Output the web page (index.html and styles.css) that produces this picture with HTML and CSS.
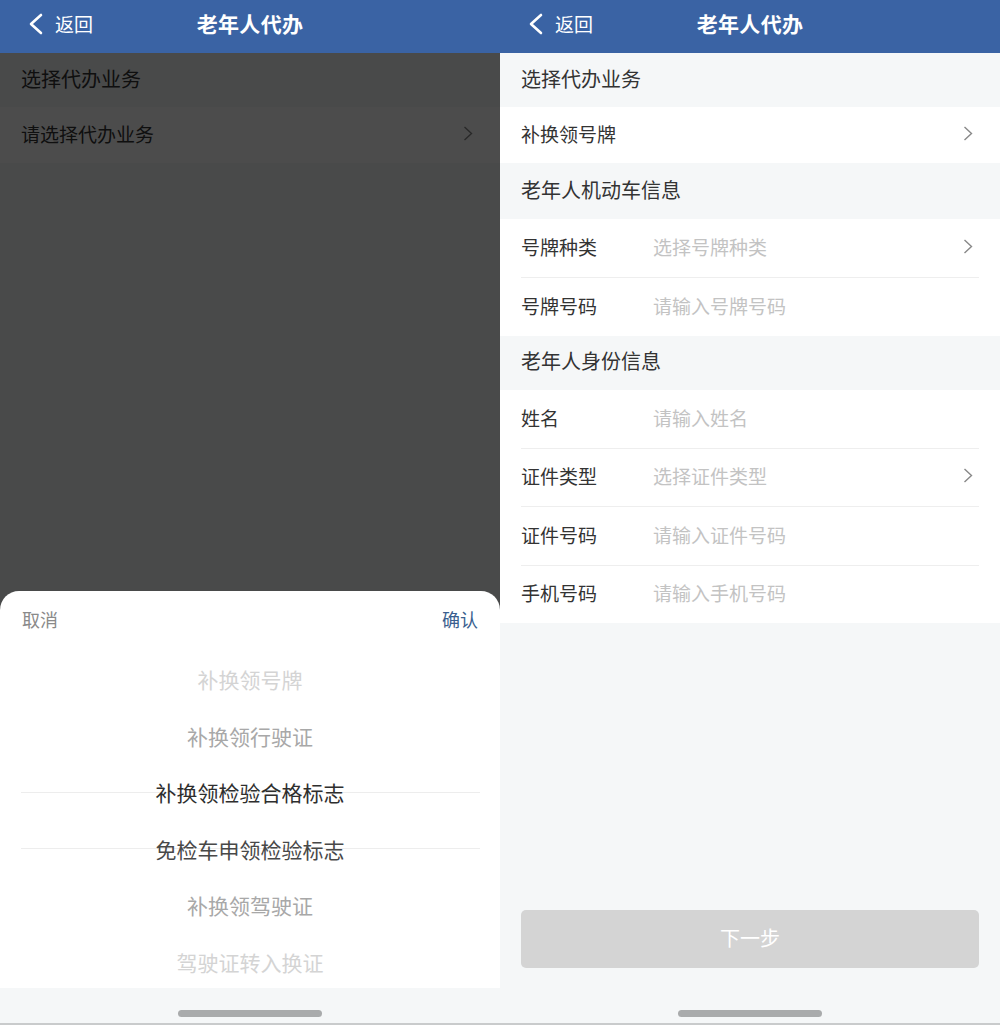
FILE: index.html
```html
<!DOCTYPE html>
<html lang="zh-CN">
<head>
<meta charset="utf-8">
<title>老年人代办</title>
<link rel="stylesheet" href="styles.css">
</head>
<body>
<div class="screens">
  <!-- Left screen: picker open -->
  <div class="screen screen-left">
    <div class="header">
      <div class="back">
        <svg class="back-icon" width="16" height="22" viewBox="0 0 16 22"><polyline points="13,2 3,11 13,20" fill="none" stroke="#fff" stroke-width="2.6" stroke-linecap="round" stroke-linejoin="round"/></svg>
        <span class="back-text">返回</span>
      </div>
      <div class="title">老年人代办</div>
    </div>
    <div class="content">
      <div class="sec sec-top">选择代办业务</div>
      <div class="row row-select">
        <span class="row-label grow">请选择代办业务</span>
        <svg class="chev" width="10" height="15" viewBox="0 0 10 15"><polyline points="1.5,1 8.5,7.5 1.5,14" fill="none" stroke="#888" stroke-width="1.4"/></svg>
      </div>
    </div>
    <div class="overlay"></div>
    <div class="sheet">
      <div class="sheet-bar">
        <span class="cancel">取消</span>
        <span class="confirm">确认</span>
      </div>
      <div class="picker">
        <div class="pick-line pick-line-top"></div>
        <div class="pick-line pick-line-bottom"></div>
        <div class="pick-item c1">补换领号牌</div>
        <div class="pick-item c2">补换领行驶证</div>
        <div class="pick-item c3">补换领检验合格标志</div>
        <div class="pick-item c4">免检车申领检验标志</div>
        <div class="pick-item c2">补换领驾驶证</div>
        <div class="pick-item c1">驾驶证转入换证</div>
      </div>
      <div class="footer"><div class="home-bar"></div></div>
    </div>
  </div>

  <!-- Right screen: form -->
  <div class="screen screen-right">
    <div class="header">
      <div class="back">
        <svg class="back-icon" width="16" height="22" viewBox="0 0 16 22"><polyline points="13,2 3,11 13,20" fill="none" stroke="#fff" stroke-width="2.6" stroke-linecap="round" stroke-linejoin="round"/></svg>
        <span class="back-text">返回</span>
      </div>
      <div class="title">老年人代办</div>
    </div>
    <div class="content">
      <div class="sec sec-top">选择代办业务</div>
      <div class="row row-select">
        <span class="row-label grow">补换领号牌</span>
        <svg class="chev" width="10" height="15" viewBox="0 0 10 15"><polyline points="1.5,1 8.5,7.5 1.5,14" fill="none" stroke="#888" stroke-width="1.4"/></svg>
      </div>
      <div class="sec">老年人机动车信息</div>
      <div class="group">
        <div class="row">
          <span class="row-label">号牌种类</span>
          <span class="ph grow">选择号牌种类</span>
          <svg class="chev" width="10" height="15" viewBox="0 0 10 15"><polyline points="1.5,1 8.5,7.5 1.5,14" fill="none" stroke="#888" stroke-width="1.4"/></svg>
        </div>
        <div class="row">
          <span class="row-label">号牌号码</span>
          <span class="ph grow">请输入号牌号码</span>
        </div>
      </div>
      <div class="sec sec-mid">老年人身份信息</div>
      <div class="group">
        <div class="row">
          <span class="row-label">姓名</span>
          <span class="ph grow">请输入姓名</span>
        </div>
        <div class="row">
          <span class="row-label">证件类型</span>
          <span class="ph grow">选择证件类型</span>
          <svg class="chev" width="10" height="15" viewBox="0 0 10 15"><polyline points="1.5,1 8.5,7.5 1.5,14" fill="none" stroke="#888" stroke-width="1.4"/></svg>
        </div>
        <div class="row">
          <span class="row-label">证件号码</span>
          <span class="ph grow">请输入证件号码</span>
        </div>
        <div class="row">
          <span class="row-label">手机号码</span>
          <span class="ph grow">请输入手机号码</span>
        </div>
      </div>
    </div>
    <div class="spacer"></div>
    <div class="btn-wrap"><div class="btn">下一步</div></div>
    <div class="footer"><div class="home-bar"></div></div>
  </div>
</div>
</body>
</html>
```

FILE: styles.css
```css
* { box-sizing: border-box; }
html, body {
  margin: 0;
  padding: 0;
}
body {
  font-family: "Noto Sans CJK SC", "Noto Sans", sans-serif;
  color: #333;
  background: #f5f7f8;
  border-bottom: 2px solid #c9cbcc;
  width: 1000px;
}
.screens {
  display: flex;
  width: 1000px;
  height: 1023px;
}
.screen {
  position: relative;
  width: 500px;
  height: 1023px;
  background: #f5f7f8;
  display: flex;
  flex-direction: column;
  overflow: hidden;
}
.header {
  height: 53px;
  flex: none;
  background: #3a63a4;
  display: flex;
  align-items: center;
  justify-content: center;
  position: relative;
  padding-bottom: 7px;
  color: #fff;
}
.back {
  position: absolute;
  left: 28px;
  top: 0;
  height: 47px;
  display: flex;
  align-items: center;
  gap: 11px;
}
.back-icon { display: block; }
.back-text {
  font-size: 19px;
  line-height: 1;
}
.title {
  font-size: 21px;
  font-weight: 700;
  line-height: 1;
  letter-spacing: 0.3px;
}
.content {
  display: flex;
  flex-direction: column;
}
.sec {
  height: 56px;
  padding-left: 21px;
  display: flex;
  align-items: center;
  font-size: 20px;
  color: #333;
  padding-bottom: 4px;
}
.sec-top { height: 54px; }
.sec-mid { height: 54px; }
.row {
  height: 58px;
  background: #fff;
  display: flex;
  align-items: center;
  padding: 0 27px 3px 21px;
  font-size: 19px;
  position: relative;
}
.group {
  background: #fff;
}
.group .row + .row {
  border-top: 1px solid #eeeeee;
  margin: 0 21px;
  padding: 0 6px 3px 0;
  height: 58.5px;
}
.row-select { height: 56px; }
.row-label {
  width: 132px;
  flex: none;
  color: #333;
}
.row-label.grow { width: auto; }
.grow { flex: 1; }
.ph { color: #c3c3c3; }
.chev { display: block; flex: none; }

/* left overlay & sheet */
.overlay {
  position: absolute;
  left: 0;
  right: 0;
  top: 53px;
  bottom: 0;
  background: rgba(0, 0, 0, 0.7);
}
.sheet {
  position: absolute;
  left: 0;
  right: 0;
  bottom: 0;
  height: 432px;
  background: #fff;
  border-radius: 19px 19px 0 0;
  display: flex;
  flex-direction: column;
  overflow: hidden;
}
.sheet-bar {
  height: 62px;
  flex: none;
  display: flex;
  justify-content: space-between;
  align-items: center;
  padding: 0 22px 6px 22px;
  font-size: 18px;
}
.cancel { color: #8a8a8a; }
.confirm { color: #3a5f8f; }
.picker {
  position: relative;
  height: 335px;
  flex: none;
  overflow: hidden;
}
.pick-line {
  position: absolute;
  left: 21px;
  right: 20px;
  height: 1px;
  background: #ededed;
}
.pick-line-top { top: 139px; }
.pick-line-bottom { top: 195px; }
.pick-item {
  height: 56.5px;
  display: flex;
  align-items: center;
  justify-content: center;
  font-size: 21px;
  position: relative;
  padding-bottom: 4px;
}
.c1 { color: #d4d4d4; }
.c2 { color: #a8a8a8; }
.c3 { color: #2e2e2e; }
.c4 { color: #484848; }
.footer {
  height: 35px;
  flex: none;
  background: #f5f7f8;
  display: flex;
  justify-content: center;
  padding-top: 22px;
}
.home-bar {
  width: 144px;
  height: 7px;
  border-radius: 4px;
  background: #a9abac;
}

/* right */
.spacer { flex: 1; }
.btn-wrap {
  padding: 0 21px;
  margin-bottom: 20px;
}
.btn {
  height: 58px;
  border-radius: 5px;
  background: #d4d4d4;
  color: #fff;
  font-size: 20px;
  display: flex;
  align-items: center;
  justify-content: center;
  padding-bottom: 4px;
}
```
